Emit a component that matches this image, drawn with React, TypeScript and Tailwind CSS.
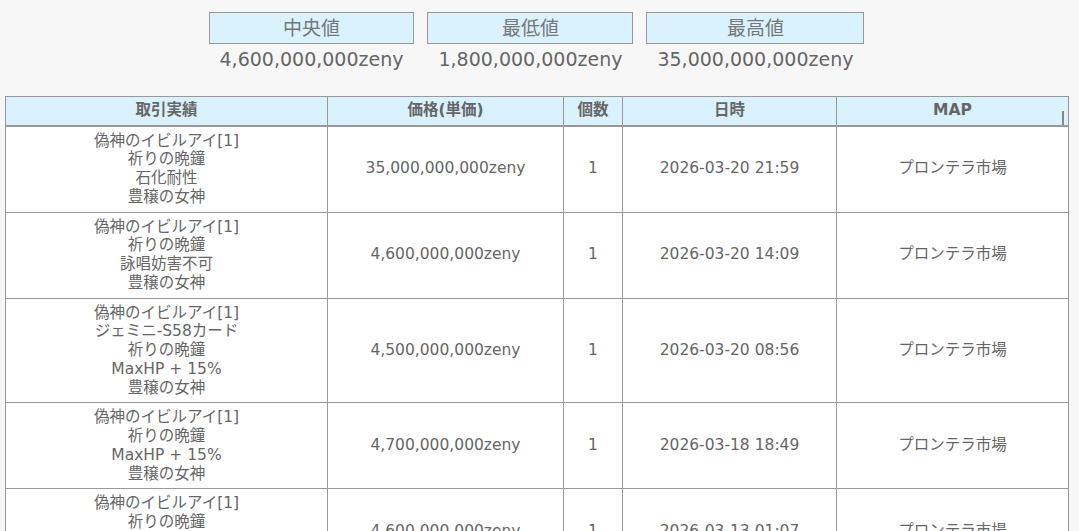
import React from "react";

interface Trade {
  id: number;
  item: string[];
  price: string;
  qty: number;
  date: string;
  map: string;
}

const trades: Trade[] = [
  {
    id: 1,
    item: ["偽神のイビルアイ[1]", "祈りの晩鐘", "石化耐性", "豊穣の女神"],
    price: "35,000,000,000zeny",
    qty: 1,
    date: "2026-03-20 21:59",
    map: "プロンテラ市場",
  },
  {
    id: 2,
    item: ["偽神のイビルアイ[1]", "祈りの晩鐘", "詠唱妨害不可", "豊穣の女神"],
    price: "4,600,000,000zeny",
    qty: 1,
    date: "2026-03-20 14:09",
    map: "プロンテラ市場",
  },
  {
    id: 3,
    item: ["偽神のイビルアイ[1]", "ジェミニ-S58カード", "祈りの晩鐘", "MaxHP + 15%", "豊穣の女神"],
    price: "4,500,000,000zeny",
    qty: 1,
    date: "2026-03-20 08:56",
    map: "プロンテラ市場",
  },
  {
    id: 4,
    item: ["偽神のイビルアイ[1]", "祈りの晩鐘", "MaxHP + 15%", "豊穣の女神"],
    price: "4,700,000,000zeny",
    qty: 1,
    date: "2026-03-18 18:49",
    map: "プロンテラ市場",
  },
  {
    id: 5,
    item: ["偽神のイビルアイ[1]", "祈りの晩鐘", "詠唱妨害不可", "豊穣の女神"],
    price: "4,600,000,000zeny",
    qty: 1,
    date: "2026-03-13 01:07",
    map: "プロンテラ市場",
  },
];

const stats = [
  { label: "中央値", value: "4,600,000,000zeny" },
  { label: "最低値", value: "1,800,000,000zeny" },
  { label: "最高値", value: "35,000,000,000zeny" },
];

const App: React.FC = () => {
  return (
    <div
      className="min-h-[531px] bg-[#f7f7f7] text-[#666] pt-[12px]"
      style={{ fontFamily: '"DejaVu Sans", "Noto Sans CJK JP", sans-serif' }}
    >
      <div className="ml-[5px] w-[1063px]">
        {/* summary */}
        <div className="flex justify-center gap-[13px]">
          {stats.map((s) => (
            <div key={s.label} className="flex flex-col items-stretch">
              <div className="h-[32px] border border-[#999] bg-[#d9f2fe] flex items-center justify-center text-[19px] text-[#777]">
                {s.label}
              </div>
              <div className="px-[11px] text-[19px] leading-[30px] text-center whitespace-nowrap">
                {s.value}
              </div>
            </div>
          ))}
        </div>

        {/* history table */}
        <table className="mt-[22px] w-[1063px] border-collapse table-fixed text-[15.5px] bg-white">
          <colgroup>
            <col className="w-[322px]" />
            <col className="w-[236px]" />
            <col className="w-[59px]" />
            <col className="w-[214px]" />
            <col className="w-[232px]" />
          </colgroup>
          <thead>
            <tr className="bg-[#d9f2fe] h-[29px]">
              <th className="border border-[#999] border-b-2 font-bold text-[#666]">取引実績</th>
              <th className="border border-[#999] border-b-2 font-bold text-[#666]">価格(単価)</th>
              <th className="border border-[#999] border-b-2 font-bold text-[#666]">個数</th>
              <th className="border border-[#999] border-b-2 font-bold text-[#666]">日時</th>
              <th className="relative border border-[#999] border-b-2 font-bold text-[#666]">
                MAP
                <span className="absolute right-[4px] bottom-0 w-[2px] h-[14px] bg-[#888]" />
              </th>
            </tr>
          </thead>
          <tbody>
            {trades.map((t) => (
              <tr key={t.id}>
                <td className="border border-[#999] py-[5px] text-center leading-[18.75px]">
                  {t.item.map((line, i) => (
                    <div key={i}>{line}</div>
                  ))}
                </td>
                <td className="border border-[#999] text-center">{t.price}</td>
                <td className="border border-[#999] text-center">{t.qty}</td>
                <td className="border border-[#999] text-center">{t.date}</td>
                <td className="border border-[#999] text-center">{t.map}</td>
              </tr>
            ))}
          </tbody>
        </table>
      </div>
    </div>
  );
};

export default App;
